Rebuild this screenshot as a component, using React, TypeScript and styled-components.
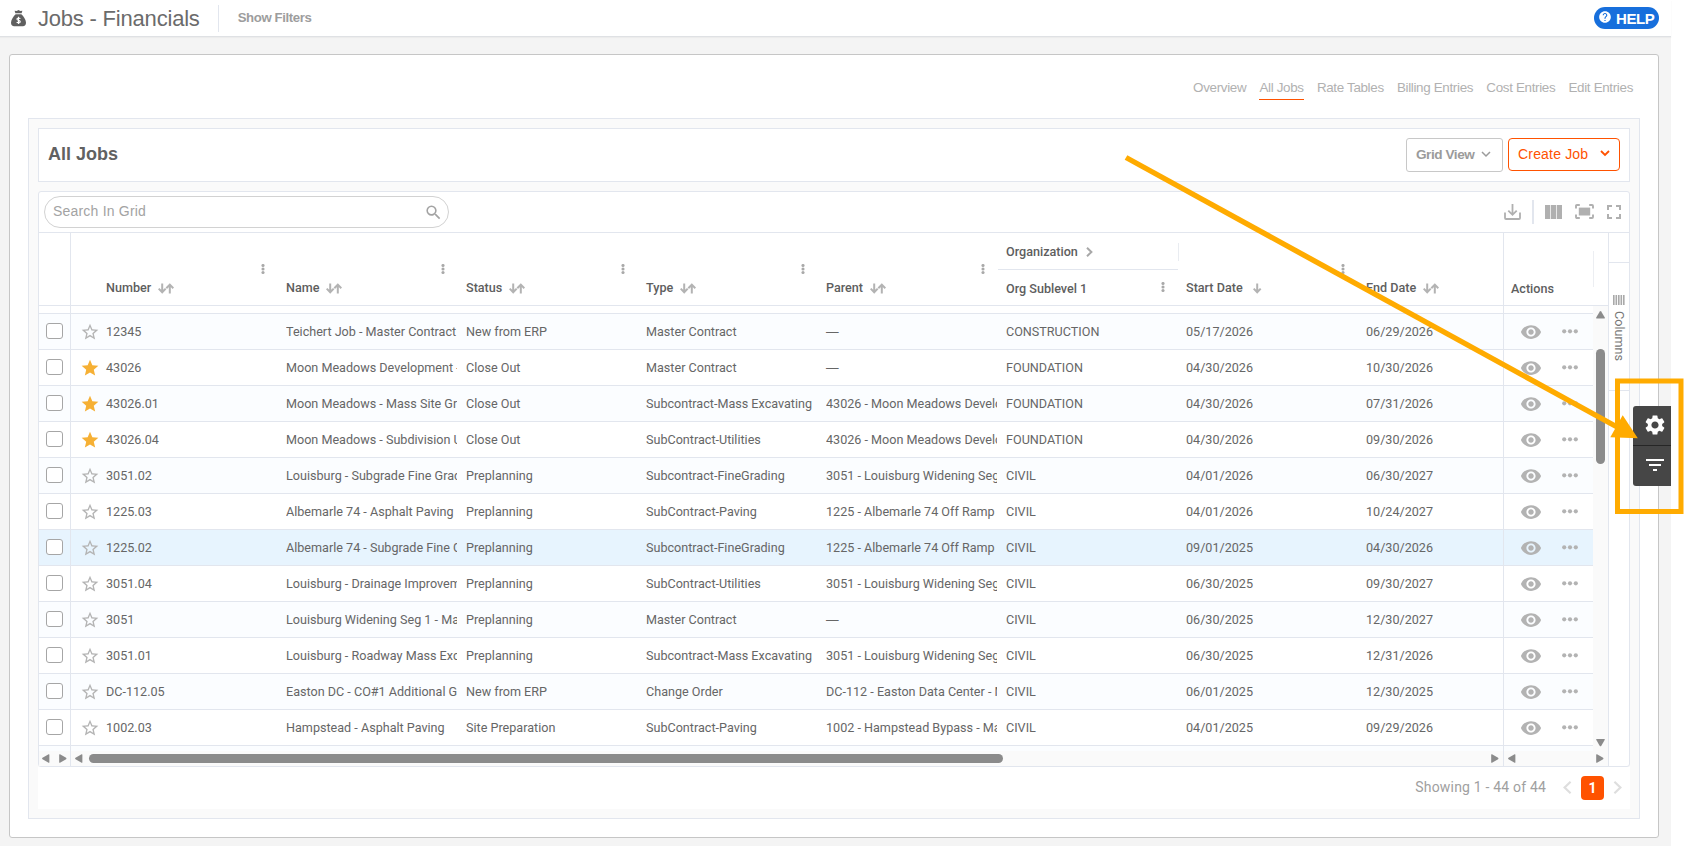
import React from "react";
import styled, { createGlobalStyle, css } from "styled-components";
import {
  MdFilterList,
  MdFullscreen,
  MdHelp,
  MdSearch,
  MdSettings,
  MdStar,
  MdStarBorder,
  MdVisibility,
} from "react-icons/md";

const arial = `"Liberation Sans", Arial, sans-serif`;
const roboto = `Roboto, "Liberation Sans", sans-serif`;
const line = "#e2e6ee";
const orange = "#ff5200";
const accent = "#ffab00";
const iconGray = "#b3b3b3";
const thumbGray = "#8b8b8b";

const GlobalStyle = createGlobalStyle`
  *, *::before, *::after { box-sizing: border-box; }
  body { margin: 0; background: #fff; font-family: ${arial}; }
  svg { display: block; flex: none; }
`;

/* ---------- page shell ---------- */

const Page = styled.div`
  position: relative;
  width: 1684px;
  height: 846px;
  overflow: hidden;
`;

const Workspace = styled.div`
  width: 1671px;
  height: 846px;
  background: #f4f4f4;
`;

const AppBar = styled.header`
  display: flex;
  align-items: flex-start;
  height: 37px;
  background: #fff;
  border-bottom: 1px solid #dfe1e4;
  box-shadow: 0 1px 1px #ececec;
`;

const BagSlot = styled.div`
  padding: 10px 0 0 11px;
`;

const PageTitle = styled.h1`
  margin: 0;
  padding-left: 12px;
  font-size: 22px;
  line-height: 37px;
  font-weight: 400;
  letter-spacing: -0.2px;
  color: #6b6b6b;
`;

const BarDivider = styled.div`
  width: 1px;
  height: 27px;
  margin: 5px 19px 0 18px;
  background: ${line};
`;

const ShowFilters = styled.div`
  flex: 1;
  font-size: 13.2px;
  font-weight: 700;
  line-height: 36px;
  letter-spacing: -0.38px;
  color: #9d9d9d;
`;

const HelpPill = styled.div`
  display: flex;
  align-items: flex-start;
  width: 65px;
  height: 22px;
  margin: 7px 12px 0 0;
  padding: 3px 0 0 4px;
  border-radius: 11px;
  background: #176fdc;
  color: #fff;
`;

const HelpText = styled.span`
  padding-left: 4px;
  font-size: 15px;
  line-height: 18px;
  font-weight: 700;
  letter-spacing: -0.4px;
`;

const Panel = styled.main`
  width: 1650px;
  height: 784px;
  margin: 17px 0 0 9px;
  padding: 0 18px;
  border: 1px solid #c6c6c6;
  border-radius: 3px;
  background: #fff;
`;

const Tabs = styled.nav`
  display: flex;
  justify-content: flex-end;
  gap: 13.2px;
  height: 63px;
  padding: 23px 7px 0 0;
`;

const Tab = styled.span<{ $active?: boolean }>`
  height: 22px;
  line-height: 20px;
  font-size: 13.4px;
  letter-spacing: -0.33px;
  color: #b1b1b1;
  border-bottom: 1px solid ${(p) => (p.$active ? orange : "transparent")};
`;

const Inner = styled.section`
  height: 701px;
  padding: 9px;
  border: 1px solid ${line};
  background: #fafafa;
`;

const TitleCard = styled.div`
  display: flex;
  align-items: flex-start;
  height: 54px;
  margin-bottom: 9px;
  padding: 9px 9px 0 9px;
  border: 1px solid ${line};
  background: #fff;
`;

const CardTitle = styled.h2`
  flex: 1;
  margin: 0;
  font-size: 18px;
  font-weight: 700;
  line-height: 32px;
  color: #616161;
`;

const GridViewButton = styled.div`
  display: flex;
  align-items: center;
  gap: 7px;
  width: 97px;
  height: 34px;
  margin-right: 5px;
  padding: 0 0 2px 9px;
  border: 1px solid #c8c8c8;
  border-radius: 3px;
  font-size: 13.6px;
  font-weight: 700;
  letter-spacing: -0.45px;
  color: #9b9b9b;
`;

const CreateButton = styled.div`
  display: flex;
  align-items: center;
  gap: 12px;
  width: 112px;
  height: 33px;
  padding: 0 0 2px 9px;
  border: 1px solid ${orange};
  border-radius: 4px;
  font-size: 14px;
  letter-spacing: 0.18px;
  color: ${orange};
`;

/* ---------- grid ---------- */

const Grid = styled.div`
  height: 576px;
  border: 1px solid ${line};
  border-radius: 3px;
  background: #fff;
  font-family: ${roboto};
`;

const Toolbar = styled.div`
  display: flex;
  align-items: flex-start;
  justify-content: space-between;
  height: 41px;
  padding: 4px 3px 0 5px;
  border-bottom: 1px solid ${line};
`;

const SearchBox = styled.div`
  display: flex;
  align-items: center;
  justify-content: space-between;
  width: 405px;
  height: 32px;
  padding: 0 5px 0 8px;
  border: 1px solid #d2d2d2;
  border-radius: 16px;
  font-family: ${arial};
  font-size: 14px;
  letter-spacing: 0.2px;
  color: #a3a3a3;
`;

const SearchLabel = styled.span`
  padding-bottom: 2px;
`;

const Tools = styled.div`
  display: flex;
  align-items: center;
  height: 31px;
  color: #b0b0b0;
`;

const ToolDivider = styled.div`
  width: 2px;
  height: 24px;
  margin: 0 11px;
  background: ${line};
`;

const ToolGap = styled.div`
  margin: 0 8px 0 13px;
`;

const GridBody = styled.div`
  display: flex;
  height: 533px;
`;

const GridMain = styled.div`
  display: flex;
  flex-direction: column;
  width: 1569px;
`;

const HeadRow = styled.div`
  display: flex;
  height: 73px;
  border-bottom: 1px solid ${line};
  font-size: 12.6px;
  font-weight: 500;
  color: #5e5e5e;
`;

const HeadCheck = styled.div`
  width: 32px;
  border-right: 1px solid ${line};
`;

const HeadCenter = styled.div`
  display: grid;
  grid-template-columns: 207px repeat(6, 180px) 145px;
  width: 1432px;
`;

const HeadCell = styled.div<{ $first?: boolean }>`
  display: flex;
  flex-direction: column;
  padding: 31px 12px 0 ${(p) => (p.$first ? 35 : 8)}px;
`;

const KebabRow = styled.div`
  display: flex;
  justify-content: flex-end;
  height: 14px;
`;

const HeadLabel = styled.div<{ $wide?: boolean }>`
  display: flex;
  align-items: center;
  gap: ${(p) => (p.$wide ? 10 : 7)}px;
  height: 20px;
  line-height: 20px;
  white-space: nowrap;
`;

const GroupCell = styled.div`
  display: flex;
  flex-direction: column;
`;

const GroupTop = styled.div`
  display: flex;
  align-items: center;
  gap: 8px;
  height: 37px;
  padding: 1px 0 0 8px;
  border-bottom: 1px solid ${line};
`;

const GroupSub = styled.div`
  display: flex;
  align-items: center;
  justify-content: space-between;
  height: 35px;
  padding: 3px 12px 0 8px;
  line-height: 20px;
`;

const GroupSubKebab = styled.div`
  padding-bottom: 4px;
`;

const GroupTick = styled.div`
  width: 1px;
  height: 18px;
  margin-left: auto;
  margin-right: -1px;
  background: #e9ecf1;
`;

const HeadActions = styled.div`
  display: flex;
  justify-content: space-between;
  width: 105px;
  padding: 18px 14px 0 7px;
  border-left: 1px solid ${line};
`;

const ActionsLabel = styled.span`
  padding-top: 28px;
  line-height: 20px;
`;

const ActionsTick = styled.div`
  width: 1px;
  height: 36px;
  background: #eceef2;
`;

const Viewport = styled.div`
  display: flex;
  height: 445px;
`;

const Rows = styled.div`
  width: 1554px;
  overflow: hidden;
`;

const tones = {
  plain: css`
    background: #fff;
  `,
  tint: css`
    background: #fbfdff;
  `,
  hover: css`
    background: #e7f4fe;
  `,
};
type Tone = keyof typeof tones;

const Row = styled.div<{ $tone: Tone; $height?: number }>`
  display: flex;
  height: ${(p) => p.$height ?? 36}px;
  border-bottom: 1px solid ${line};
  ${(p) => tones[p.$tone]}
  font-size: 12.6px;
  color: #666;
`;

const CheckCell = styled.div`
  display: flex;
  align-items: center;
  justify-content: center;
  width: 32px;
  border-right: 1px solid ${line};
`;

const Checkbox = styled.span`
  width: 17px;
  height: 16px;
  margin-bottom: 1px;
  border: 1px solid #a6a6a6;
  border-radius: 3px;
  background: #fff;
`;

const Cells = styled.div`
  display: grid;
  grid-template-columns: 207px repeat(6, 180px) 145px;
  width: 1432px;
`;

const Cell = styled.div`
  padding: 0 1px 0 8px;
  line-height: 36px;
`;

const CellText = styled.div`
  overflow: hidden;
  white-space: pre;
`;

const EmptyValue = styled.div`
  font-family: ${arial};
`;

const NumberCell = styled.div`
  display: flex;
  align-items: flex-start;
  gap: 6px;
  padding-left: 9px;
  line-height: 36px;
`;

const StarSlot = styled.span<{ $on: boolean }>`
  padding-top: 8px;
  color: ${(p) => (p.$on ? "#f6b034" : "#b4b4b4")};
`;

const ActionCell = styled.div`
  display: flex;
  align-items: center;
  gap: 20px;
  width: 90px;
  padding-left: 16px;
  border-left: 1px solid ${line};
  color: ${iconGray};
`;

const DotsSlot = styled.span`
  padding-bottom: 1px;
`;

const VGutter = styled.div`
  display: flex;
  flex-direction: column;
  align-items: center;
  width: 15px;
  padding: 5px 0 4px 0;
  background: #fafafa;
`;

const VTrack = styled.div`
  flex: 1;
  padding-top: 30px;
`;

const VThumb = styled.div`
  width: 9px;
  height: 115px;
  border-radius: 5px;
  background: ${thumbGray};
`;

const HScroll = styled.div`
  display: flex;
  height: 15px;
  background: #fafafa;
`;

const HSection = styled.div<{ $width: number; $last?: boolean; $pad?: number }>`
  display: flex;
  align-items: center;
  justify-content: space-between;
  width: ${(p) => p.$width}px;
  padding: 0 ${(p) => (p.$pad ? 4 : 3)}px 0 ${(p) => p.$pad ?? 3}px;
  border-right: ${(p) => (p.$last ? "0" : `1px solid ${line}`)};
`;

const HTrack = styled.div`
  flex: 1;
  padding-left: 6px;
`;

const HThumb = styled.div`
  width: 914px;
  height: 9px;
  border-radius: 5px;
  background: ${thumbGray};
`;

const SidePanel = styled.aside`
  width: 21px;
  border-left: 1px solid ${line};
`;

const SideHead = styled.div`
  height: 30px;
  border-bottom: 1px solid ${line};
`;

const SideTab = styled.div`
  display: flex;
  flex-direction: column;
  align-items: flex-start;
  gap: 6px;
  height: 128px;
  padding: 32px 0 0 4px;
  border-bottom: 1px solid ${line};
`;

const VerticalText = styled.span`
  writing-mode: vertical-rl;
  margin-left: -1px;
  font-size: 12.6px;
  line-height: 14px;
  color: #777;
`;

const Footer = styled.div`
  display: flex;
  align-items: flex-start;
  justify-content: flex-end;
  height: 42px;
  padding: 9px 8px 0 0;
  background: #fff;
  font-family: ${roboto};
`;

const Showing = styled.span`
  margin-right: 17px;
  font-size: 14px;
  line-height: 23px;
  letter-spacing: 0.19px;
  color: #a0a0a0;
`;

const PagerArrow = styled.span`
  padding-top: 5px;
`;

const PageNumber = styled.span`
  width: 23px;
  height: 24px;
  margin: 0 9px 0 9px;
  border-radius: 4px;
  background: ${orange};
  color: #fff;
  font-size: 14px;
  font-weight: 700;
  line-height: 25px;
  text-align: center;
`;

/* ---------- overlays ---------- */

const Dock = styled.div`
  position: absolute;
  left: 1633px;
  top: 406px;
  width: 38px;
  height: 80px;
  border-radius: 3px 0 0 3px;
  background: #464646;
  color: #fff;
`;

const DockButton = styled.div<{ $divided?: boolean }>`
  height: 40px;
  padding: 7px 0 0 10px;
  border-bottom: ${(p) => (p.$divided ? "1px solid #262626" : "0")};
`;

const Annotation = styled.svg`
  position: absolute;
  left: 0;
  top: 0;
`;

/* ---------- icons ---------- */

const BagIcon = () => (
  <svg width="15" height="17" viewBox="0 0 15 17" fill="#5f5f5f">
    <path d="M3.6 0.8 L5.6 1 L7.5 0 L9.4 1 L11.4 0.8 L10.6 3.2 H4.4 Z" />
    <path d="M4.6 4.2 H10.4 C12.6 6.4 15 9.5 15 12.8 C15 15 13.8 16.2 11.8 16.2 H3.2 C1.2 16.2 0 15 0 12.8 C0 9.5 2.4 6.4 4.6 4.2 Z" />
    <path
      d="M9.3 8.7 C8.9 7.9 6 7.6 5.9 9.1 C5.8 10.7 9.3 10 9.3 11.8 C9.2 13.3 6.2 13.1 5.7 12.1 M7.5 6.8 V14"
      fill="none"
      stroke="#fff"
      strokeWidth="1.1"
    />
  </svg>
);

const Chevron = ({ w = 8, h = 5, stroke = 1.5 }: { w?: number; h?: number; stroke?: number }) => (
  <svg width={w + 2} height={h + 2} viewBox={`-1 -1 ${w + 2} ${h + 2}`} fill="none" stroke="currentColor" strokeWidth={stroke}>
    <path d={`M0 0 L${w / 2} ${h - 1} L${w} 0`} />
  </svg>
);

const DownloadIcon = () => (
  <svg width="17" height="16" viewBox="0 0 17 16" fill="none" stroke="currentColor" strokeWidth="1.8">
    <path d="M1 8.5 V14 Q1 15 2 15 H15 Q16 15 16 14 V8.5" />
    <path d="M8.5 0 V10.5 M4.3 6.6 L8.5 10.8 L12.7 6.6" />
  </svg>
);

const ColumnsIcon = () => (
  <svg width="17" height="14" viewBox="0 0 17 14" fill="currentColor">
    <rect x="0" y="0" width="5.2" height="14" />
    <rect x="5.9" y="0" width="5.2" height="14" />
    <rect x="11.8" y="0" width="5.2" height="14" />
  </svg>
);

const FitIcon = () => (
  <svg width="19" height="15" viewBox="0 0 19 15" fill="none" stroke="currentColor" strokeWidth="1.9">
    <path d="M1 4.5 V2 Q1 1 2 1 H4.8 M14.2 1 H17 Q18 1 18 2 V4.5 M18 10.5 V13 Q18 14 17 14 H14.2 M4.8 14 H2 Q1 14 1 13 V10.5" />
    <rect x="3.8" y="3.6" width="11.4" height="7.9" fill="currentColor" stroke="none" />
  </svg>
);

const Kebab = () => (
  <svg width="6" height="10" viewBox="0 0 6 10" fill="#a9a9a9">
    <circle cx="3" cy="1.5" r="1.55" />
    <circle cx="3" cy="5" r="1.55" />
    <circle cx="3" cy="8.5" r="1.55" />
  </svg>
);

const SortIcon = ({ single }: { single?: boolean }) => (
  <svg width={single ? 9 : 16} height="11" viewBox={`0 0 ${single ? 9 : 16} 11`} fill="none" stroke={iconGray} strokeWidth="2">
    <path d="M4.2 0.4 V9.4 M0.7 5.6 L4.2 9.2 L7.7 5.6" />
    {!single && <path d="M11.8 10.4 V1.4 M8.3 5.2 L11.8 1.6 L15.3 5.2" />}
  </svg>
);

const Dots = () => (
  <svg width="16" height="5" viewBox="0 0 16 5" fill="currentColor">
    <circle cx="2.2" cy="2.3" r="2.1" />
    <circle cx="8" cy="2.3" r="2.1" />
    <circle cx="13.8" cy="2.3" r="2.1" />
  </svg>
);

const GroupArrow = () => (
  <svg width="7" height="10" viewBox="0 0 7 10" fill="none" stroke="#a8a8a8" strokeWidth="2">
    <path d="M1 0.8 L5.4 5 L1 9.2" />
  </svg>
);

const BarsIcon = () => (
  <svg width="12" height="10" viewBox="0 0 12 10" fill="#a9a9a9">
    {[0, 2.5, 5, 7.5, 10].map((x) => (
      <rect key={x} x={x} y="0" width="1.6" height="10" />
    ))}
  </svg>
);

const paths = {
  up: "M0.2 6.6 Q0 7.4 0.8 7.4 H8.2 Q9 7.4 8.8 6.6 L5.2 0.5 Q4.5 -0.3 3.8 0.5 Z",
  down: "M0.2 0.8 Q0 0 0.8 0 H8.2 Q9 0 8.8 0.8 L5.2 6.9 Q4.5 7.7 3.8 6.9 Z",
};

const VArrow = ({ dir }: { dir: keyof typeof paths }) => (
  <svg width="9" height="8" viewBox="0 0 9 8" fill={thumbGray}>
    <path d={paths[dir]} />
  </svg>
);

const HArrow = ({ left }: { left?: boolean }) => (
  <svg width="8" height="9" viewBox="0 0 8 9" fill={thumbGray}>
    <path
      d={
        left
          ? "M6.6 0.2 Q7.4 0 7.4 0.8 V8.2 Q7.4 9 6.6 8.8 L0.5 5.2 Q-0.3 4.5 0.5 3.8 Z"
          : "M1 0.2 Q0.2 0 0.2 0.8 V8.2 Q0.2 9 1 8.8 L7.1 5.2 Q7.9 4.5 7.1 3.8 Z"
      }
    />
  </svg>
);

const PageChevron = ({ left }: { left?: boolean }) => (
  <svg width="9" height="13" viewBox="0 0 9 13" fill="none" stroke="#dedede" strokeWidth="2.2">
    <path d={left ? "M7.6 0.8 L1.6 6.5 L7.6 12.2" : "M1.4 0.8 L7.4 6.5 L1.4 12.2"} />
  </svg>
);

/* ---------- data ---------- */

type Job = [string, string, string, string, string, string, string, string];

const jobs: Job[] = [
  ["12345", "Teichert Job - Master Contract", "New from ERP", "Master Contract", "", "CONSTRUCTION", "05/17/2026", "06/29/2026"],
  ["43026", "Moon Meadows Development -", "Close Out", "Master Contract", "", "FOUNDATION", "04/30/2026", "10/30/2026"],
  ["43026.01", "Moon Meadows - Mass Site Gr", "Close Out", "Subcontract-Mass Excavating", "43026 - Moon Meadows Develo", "FOUNDATION", "04/30/2026", "07/31/2026"],
  ["43026.04", "Moon Meadows - Subdivision U", "Close Out", "SubContract-Utilities", "43026 - Moon Meadows Develo", "FOUNDATION", "04/30/2026", "09/30/2026"],
  ["3051.02", "Louisburg - Subgrade Fine Grad", "Preplanning", "Subcontract-FineGrading", "3051 - Louisburg Widening Seg", "CIVIL", "04/01/2026", "06/30/2027"],
  ["1225.03", "Albemarle 74 - Asphalt Paving", "Preplanning", "SubContract-Paving", "1225 - Albemarle 74 Off Ramp", "CIVIL", "04/01/2026", "10/24/2027"],
  ["1225.02", "Albemarle 74 - Subgrade Fine G", "Preplanning", "Subcontract-FineGrading", "1225 - Albemarle 74 Off Ramp", "CIVIL", "09/01/2025", "04/30/2026"],
  ["3051.04", "Louisburg - Drainage Improvem", "Preplanning", "SubContract-Utilities", "3051 - Louisburg Widening Seg", "CIVIL", "06/30/2025", "09/30/2027"],
  ["3051", "Louisburg Widening Seg 1 - Ma", "Preplanning", "Master Contract", "", "CIVIL", "06/30/2025", "12/30/2027"],
  ["3051.01", "Louisburg - Roadway Mass Exc", "Preplanning", "Subcontract-Mass Excavating", "3051 - Louisburg Widening Seg", "CIVIL", "06/30/2025", "12/31/2026"],
  ["DC-112.05", "Easton DC - CO#1 Additional G", "New from ERP", "Change Order", "DC-112 - Easton Data Center - M", "CIVIL", "06/01/2025", "12/30/2025"],
  ["1002.03", "Hampstead - Asphalt Paving", "Site Preparation", "SubContract-Paving", "1002 - Hampstead Bypass - Ma", "CIVIL", "04/01/2025", "09/29/2026"],
];

const favorites = new Set(["43026", "43026.01", "43026.04"]);
const hovered = "1225.02";

const tabs = ["Overview", "All Jobs", "Rate Tables", "Billing Entries", "Cost Entries", "Edit Entries"];

/* ---------- pieces ---------- */

const ColumnHead = ({ label, first, single, last }: { label: string; first?: boolean; single?: boolean; last?: boolean }) => (
  <HeadCell $first={first}>
    <KebabRow>{!last && <Kebab />}</KebabRow>
    <HeadLabel $wide={single}>
      {label}
      <SortIcon single={single} />
    </HeadLabel>
  </HeadCell>
);

const JobRow = ({ job, tone }: { job: Job; tone: Tone }) => {
  const [number, ...rest] = job;
  const on = favorites.has(number);
  return (
    <Row $tone={tone}>
      <CheckCell>
        <Checkbox />
      </CheckCell>
      <Cells>
        <NumberCell>
          <StarSlot $on={on}>{on ? <MdStar size={20} /> : <MdStarBorder size={20} />}</StarSlot>
          {number}
        </NumberCell>
        {rest.map((text, i) => (
          <Cell key={i}>{text ? <CellText>{text}</CellText> : <EmptyValue>—</EmptyValue>}</Cell>
        ))}
      </Cells>
      <ActionCell>
        <MdVisibility size={22} />
        <DotsSlot>
          <Dots />
        </DotsSlot>
      </ActionCell>
    </Row>
  );
};

const SliverRow = ({ tone, height }: { tone: Tone; height: number }) => (
  <Row $tone={tone} $height={height}>
    <CheckCell />
    <Cells />
    <ActionCell />
  </Row>
);

export default function App() {
  return (
    <Page>
      <GlobalStyle />
      <Workspace>
        <AppBar>
          <BagSlot>
            <BagIcon />
          </BagSlot>
          <PageTitle>Jobs - Financials</PageTitle>
          <BarDivider />
          <ShowFilters>Show Filters</ShowFilters>
          <HelpPill>
            <MdHelp size={14} />
            <HelpText>HELP</HelpText>
          </HelpPill>
        </AppBar>
        <Panel>
          <Tabs>
            {tabs.map((t) => (
              <Tab key={t} $active={t === "All Jobs"}>
                {t}
              </Tab>
            ))}
          </Tabs>
          <Inner>
            <TitleCard>
              <CardTitle>All Jobs</CardTitle>
              <GridViewButton>
                Grid View
                <Chevron />
              </GridViewButton>
              <CreateButton>
                Create Job
                <Chevron stroke={1.8} />
              </CreateButton>
            </TitleCard>
            <Grid>
              <Toolbar>
                <SearchBox>
                  <SearchLabel>Search In Grid</SearchLabel>
                  <MdSearch size={19} />
                </SearchBox>
                <Tools>
                  <DownloadIcon />
                  <ToolDivider />
                  <ColumnsIcon />
                  <ToolGap>
                    <FitIcon />
                  </ToolGap>
                  <MdFullscreen size={24} />
                </Tools>
              </Toolbar>
              <GridBody>
                <GridMain>
                  <HeadRow>
                    <HeadCheck />
                    <HeadCenter>
                      <ColumnHead label="Number" first />
                      <ColumnHead label="Name" />
                      <ColumnHead label="Status" />
                      <ColumnHead label="Type" />
                      <ColumnHead label="Parent" />
                      <GroupCell>
                        <GroupTop>
                          Organization
                          <GroupArrow />
                          <GroupTick />
                        </GroupTop>
                        <GroupSub>
                          Org Sublevel 1
                          <GroupSubKebab>
                            <Kebab />
                          </GroupSubKebab>
                        </GroupSub>
                      </GroupCell>
                      <ColumnHead label="Start Date" single />
                      <ColumnHead label="End Date" last />
                    </HeadCenter>
                    <HeadActions>
                      <ActionsLabel>Actions</ActionsLabel>
                      <ActionsTick />
                    </HeadActions>
                  </HeadRow>
                  <Viewport>
                    <Rows>
                      <SliverRow tone="plain" height={8} />
                      {jobs.map((job, i) => (
                        <JobRow key={job[0]} job={job} tone={job[0] === hovered ? "hover" : i % 2 ? "plain" : "tint"} />
                      ))}
                      <SliverRow tone="tint" height={8} />
                    </Rows>
                    <VGutter>
                      <VArrow dir="up" />
                      <VTrack>
                        <VThumb />
                      </VTrack>
                      <VArrow dir="down" />
                    </VGutter>
                  </Viewport>
                  <HScroll>
                    <HSection $width={32}>
                      <HArrow left />
                      <HArrow />
                    </HSection>
                    <HSection $width={1433} $pad={4}>
                      <HArrow left />
                      <HTrack>
                        <HThumb />
                      </HTrack>
                      <HArrow />
                    </HSection>
                    <HSection $width={104} $pad={4} $last>
                      <HArrow left />
                      <HArrow />
                    </HSection>
                  </HScroll>
                </GridMain>
                <SidePanel>
                  <SideHead />
                  <SideTab>
                    <BarsIcon />
                    <VerticalText>Columns</VerticalText>
                  </SideTab>
                </SidePanel>
              </GridBody>
            </Grid>
            <Footer>
              <Showing>Showing 1 - 44 of 44</Showing>
              <PagerArrow>
                <PageChevron left />
              </PagerArrow>
              <PageNumber>1</PageNumber>
              <PagerArrow>
                <PageChevron />
              </PagerArrow>
            </Footer>
          </Inner>
        </Panel>
      </Workspace>
      <Dock>
        <DockButton $divided>
          <MdSettings size={24} />
        </DockButton>
        <DockButton>
          <MdFilterList size={24} />
        </DockButton>
      </Dock>
      <Annotation width="1684" height="846" viewBox="0 0 1684 846">
        <rect x="1617.5" y="381" width="63.5" height="130.5" fill="none" stroke={accent} strokeWidth="5" />
        <path d="M1126 157.5 L1618 427.5" stroke={accent} strokeWidth="5.4" />
        <path d="M1622.7 415.3 L1610.3 437.3 L1637.8 438.3 Z" fill={accent} />
      </Annotation>
    </Page>
  );
}
